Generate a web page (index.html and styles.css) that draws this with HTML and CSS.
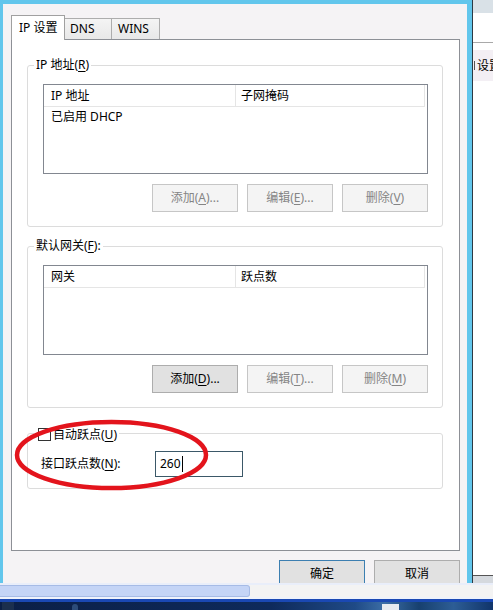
FILE: index.html
```html
<!DOCTYPE html>
<html lang="zh-CN">
<head>
<meta charset="utf-8">
<title>IP 设置</title>
<link rel="stylesheet" href="styles.css">
</head>
<body>
<div class="screen">
  <div class="main">
    <div class="dialog">
      <div class="tabs">
        <div class="tab active">IP 设置</div>
        <div class="tab dns">DNS</div>
        <div class="tab wins">WINS</div>
      </div>
      <div class="panel">
        <fieldset class="group g1">
          <legend>IP 地址(<u>R</u>)</legend>
          <div class="list">
            <div class="list-head"><div class="col c1">IP 地址</div><div class="col c2">子网掩码</div></div>
            <div class="list-row">已启用 DHCP</div>
          </div>
          <div class="btns">
            <div class="btn disabled">添加(<u>A</u>)...</div>
            <div class="btn disabled">编辑(<u>E</u>)...</div>
            <div class="btn disabled">删除(<u>V</u>)</div>
          </div>
        </fieldset>
        <fieldset class="group g2">
          <legend>默认网关(<u>F</u>):</legend>
          <div class="list">
            <div class="list-head"><div class="col c1">网关</div><div class="col c2">跃点数</div></div>
          </div>
          <div class="btns">
            <div class="btn">添加(<u>D</u>)...</div>
            <div class="btn disabled">编辑(<u>T</u>)...</div>
            <div class="btn disabled">删除(<u>M</u>)</div>
          </div>
        </fieldset>
        <fieldset class="group g3">
          <legend><span class="legend-inner"><span class="chk"></span>自动跃点(<u>U</u>)</span></legend>
          <div class="hop">
            <div class="hop-label">接口跃点数(<u>N</u>):</div>
            <div class="hop-input"><span class="caret">260</span></div>
          </div>
        </fieldset>
      </div>
      <div class="dlg-btns">
        <div class="btn default">确定</div>
        <div class="btn">取消</div>
      </div>
    </div>
    <div class="otherwin">
      <div class="ow-top"></div>
      <div class="ow-bar"></div>
      <div class="ow-gap"></div>
      <div class="ow-item"><span class="ow-stem"></span><span class="ow-text">设置</span></div>
      <div class="ow-fill"></div>
      <div class="ow-bottom"></div>
    </div>
  </div>
  <div class="bottombar">
    <div class="bb-top"></div>
    <div class="bb-mid"><div class="bb-prog"></div></div>
    <div class="bb-line"></div>
    <div class="bb-blue"></div>
    <div class="bb-task">
      <div class="tk-icon1"></div>
      <div class="tk-icon2"></div>
      <div class="tk-icon3"></div>
    </div>
  </div>
  <svg class="mark" width="493" height="610" viewBox="0 0 493 610">
    <ellipse cx="111.5" cy="455" rx="94.5" ry="33" fill="none" stroke="#e3141c" stroke-width="4.5"/>
  </svg>
</div>
</body>
</html>
```
FILE: styles.css
```css
html, body {
  margin: 0;
  padding: 0;
}
body {
  width: 493px;
  height: 610px;
  overflow: hidden;
  font-family: "Noto Sans", "Noto Sans CJK SC", sans-serif;
  font-size: 12px;
  line-height: 16px;
  color: #000;
  background: #fff;
}
u {
  text-decoration: underline;
  text-underline-offset: 2px;
}
.screen {
  position: relative;
  width: 493px;
  height: 610px;
  display: flex;
  flex-direction: column;
}
.main {
  height: 583px;
  display: flex;
  overflow: hidden;
}
.dialog {
  width: 472px;
  flex: none;
  box-sizing: border-box;
  border-left: 3px solid #62c6ec;
  border-top: 4px solid #62c6ec;
  border-right: 5px solid #62c6ec;
  background: #f5f3f5;
  padding: 11px 7px 0 8px;
}
.tabs {
  display: flex;
  align-items: flex-start;
  height: 24px;
  position: relative;
  z-index: 1;
}
.tab {
  box-sizing: border-box;
  border: 1px solid #adadad;
  border-bottom: none;
  background: linear-gradient(#f4f4f4, #e8e8e8);
  margin-top: 3px;
  height: 21px;
  padding-top: 2px;
  white-space: nowrap;
}
.tab.active {
  background: #fff;
  margin-top: 0;
  height: 25px;
  width: 54px;
  padding: 4px 0 0 7px;
  border-color: #a0a0a0;
  position: relative;
  z-index: 2;
}
.tab.dns {
  width: 48px;
  margin-left: -1px;
  padding-left: 5px;
}
.tab.wins {
  width: 49px;
  margin-left: -1px;
  padding-left: 6px;
}
.panel {
  box-sizing: border-box;
  height: 512px;
  border: 1px solid #8d9096;
  background: #fff;
  padding: 0 16px 0 15px;
}
.group {
  margin: 0;
  border: 1px solid #dcdcdc;
  border-radius: 3px;
  padding: 0 14px 14px 15px;
  min-width: 0;
}
.group legend {
  padding: 0 2px;
  margin-left: -9px;
  line-height: 16px;
}
.g1 { margin-top: 17px; }
.g2 { margin-top: 11px; }
.g3 {
  margin-top: 17px;
  padding: 0 14px 11px 13px;
}
.g3 legend { margin-left: -7px; }
.legend-inner {
  display: flex;
  align-items: center;
  height: 16px;
  margin-top: 2px;
  margin-bottom: -2px;
}
.chk {
  display: block;
  width: 13px;
  height: 13px;
  box-sizing: border-box;
  border: 1px solid #333;
  background: #fff;
  margin: -2px 2px 0 2px;
}
.list {
  margin-top: 11px;
  height: 90px;
  box-sizing: border-box;
  border: 1px solid #828790;
  background: #fff;
}
.list-head {
  display: flex;
  height: 22px;
}
.col {
  box-sizing: border-box;
  height: 22px;
  padding-top: 3px;
  border-right: 1px solid #e5e5e5;
  border-bottom: 1px solid #e5e5e5;
  white-space: nowrap;
}
.c1 { width: 192px; padding-left: 7px; }
.c2 { width: 189px; padding-left: 5px; }
.list-row {
  padding: 2px 0 0 7px;
}
.btns {
  display: flex;
  justify-content: flex-end;
  gap: 9px;
  margin-top: 10px;
}
.btn {
  box-sizing: border-box;
  width: 86px;
  height: 28px;
  flex: none;
  border: 1px solid #adadad;
  background: #e1e1e1;
  display: flex;
  align-items: center;
  justify-content: center;
  white-space: nowrap;
}
.btn.disabled {
  background: #f4f4f4;
  border-color: #c6c6c6;
  color: #858585;
}
.btn.default {
  border-color: #3c7fb1;
}
.hop {
  display: flex;
  align-items: center;
  margin-top: 10px;
}
.hop-label {
  width: 114px;
  flex: none;
}
.hop-input {
  box-sizing: border-box;
  width: 88px;
  height: 26px;
  border: 1px solid #3b5868;
  background: #fff;
  padding-left: 4px;
  display: flex;
  align-items: center;
}
.caret {
  border-right: 1px solid #000;
  padding-right: 1px;
  line-height: 16px;
}
.dlg-btns {
  display: flex;
  justify-content: flex-end;
  gap: 9px;
  margin-top: 9px;
}
.otherwin {
  flex: 1;
  border-left: 1px solid #2d3a44;
  display: flex;
  flex-direction: column;
  background: #fff;
  overflow: hidden;
}
.ow-top {
  height: 13px;
  background: #d9e1e7;
  flex: none;
}
.ow-bar {
  height: 29px;
  border-bottom: 1px solid #a9a9a9;
  flex: none;
}
.ow-gap { height: 7px; flex: none; }
.ow-item {
  height: 31px;
  flex: none;
  background: #f3eff4;
  display: flex;
  align-items: center;
  white-space: nowrap;
  overflow: hidden;
}
.ow-stem {
  width: 1px;
  height: 9px;
  background: #555;
  margin: 0 2px 0 1px;
  flex: none;
}
.ow-text { flex: none; }
.ow-fill { flex: 1; }
.ow-bottom {
  height: 7px;
  flex: none;
  background: #d5d9de;
  border-top: 1px solid #555;
}
.bottombar {
  height: 27px;
  display: flex;
  flex-direction: column;
}
.bb-top { height: 2px; background: #e9eefa; }
.bb-mid {
  height: 12px;
  display: flex;
  background: #f3f3f3;
}
.bb-prog {
  width: 250px;
  box-sizing: border-box;
  background: #c4d4f6;
  border: 1px solid #a6bbe6;
  border-left: none;
  border-radius: 0 3px 3px 0;
}
.bb-line { height: 2px; background: #eef2fb; }
.bb-blue { height: 3px; background: #1a48b3; }
.bb-task {
  height: 8px;
  display: flex;
  background: linear-gradient(90deg, #0b1f46 0%, #0e2a5b 55%, #1f4a86 72%, #3c6ea6 78%, #17406f 85%, #2d5d95 92%, #10346a 100%);
}
.tk-icon1 {
  width: 12px;
  height: 8px;
  background: #1b2f4e;
  margin-left: 2px;
}
.tk-icon2 {
  width: 6px;
  height: 6px;
  margin: 2px 0 0 58px;
  border-radius: 3px 3px 0 0;
  background: #2c4c7a;
}
.tk-icon3 {
  width: 17px;
  height: 6px;
  margin: 2px 0 0 304px;
  background: #e6eaf0;
}
.mark {
  position: absolute;
  left: 0;
  top: 0;
  pointer-events: none;
}
```
